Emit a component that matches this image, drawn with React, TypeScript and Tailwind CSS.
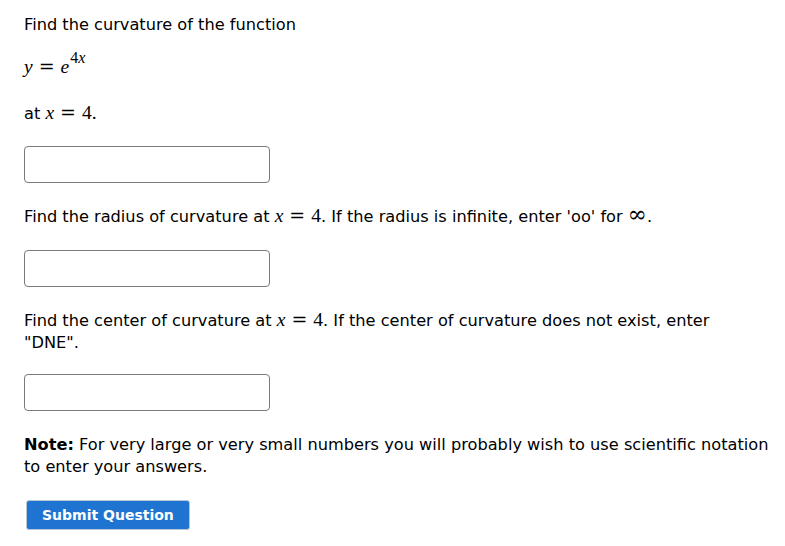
import React from 'react';

const body = { fontFamily: '"DejaVu Sans", Verdana, sans-serif' };
const serif = { fontFamily: '"Liberation Serif", "DejaVu Serif", serif' };

function M({ children }: { children: React.ReactNode }) {
  return (
    <span className="text-[19.5px] leading-none whitespace-nowrap" style={serif}>
      {children}
    </span>
  );
}

function V({ children }: { children: React.ReactNode }) {
  return <i className="italic">{children}</i>;
}

function Eq() {
  return (
    <span className="inline-block mx-[6px] text-[19px]" style={{ fontFamily: '"DejaVu Serif", serif' }}>
      =
    </span>
  );
}

function AnswerBox() {
  return (
    <input
      type="text"
      className="block w-[246px] h-[37px] border border-[#7a7a7a] rounded-[4px] bg-white px-2 outline-none"
    />
  );
}

export default function App() {
  return (
    <div className="min-h-[546px] bg-white text-black text-[16.2px] leading-[22px]" style={body}>
      <div className="pl-6 pt-[14px] w-[782px]">
        <p>Find the curvature of the function</p>

        <p className="mt-[21px] h-[22px]">
          <M>
            <V>y</V>
            <Eq />
            <V>e</V>
            <span className="relative -top-[10px] text-[16px] ml-[1px]">
              4<V>x</V>
            </span>
          </M>
        </p>

        <p className="mt-[24px]">
          at{' '}
          <M>
            <V>x</V>
            <Eq />
            4.
          </M>
        </p>

        <div className="mt-[21px]">
          <AnswerBox />
        </div>

        <p className="mt-[23px] h-[22px]">
          Find the radius of curvature at{' '}
          <M>
            <V>x</V>
            <Eq />
            4
          </M>
          . If the radius is infinite, enter 'oo' for{' '}
          <span className="text-[23px] leading-[0]" style={{ fontFamily: '"DejaVu Serif", serif' }}>
            ∞
          </span>
          .
        </p>

        <div className="mt-[22px]">
          <AnswerBox />
        </div>

        <p className="mt-[23px]">
          Find the center of curvature at{' '}
          <M>
            <V>x</V>
            <Eq />
            4
          </M>
          . If the center of curvature does not exist, enter
          <br />
          "DNE".
        </p>

        <div className="mt-[20px]">
          <AnswerBox />
        </div>

        <p className="mt-[23px]">
          <b className="font-bold">Note:</b> For very large or very small numbers you will probably wish to use scientific notation
          <br />
          to enter your answers.
        </p>

        <div className="mt-[22px] pl-[2px]">
          <button
            type="button"
            className="h-[30px] px-[15px] rounded-[3px] bg-[#1e74d0] border border-[#b9c7d6] text-white font-bold text-[14px]"
          >
            Submit Question
          </button>
        </div>
      </div>
    </div>
  );
}
